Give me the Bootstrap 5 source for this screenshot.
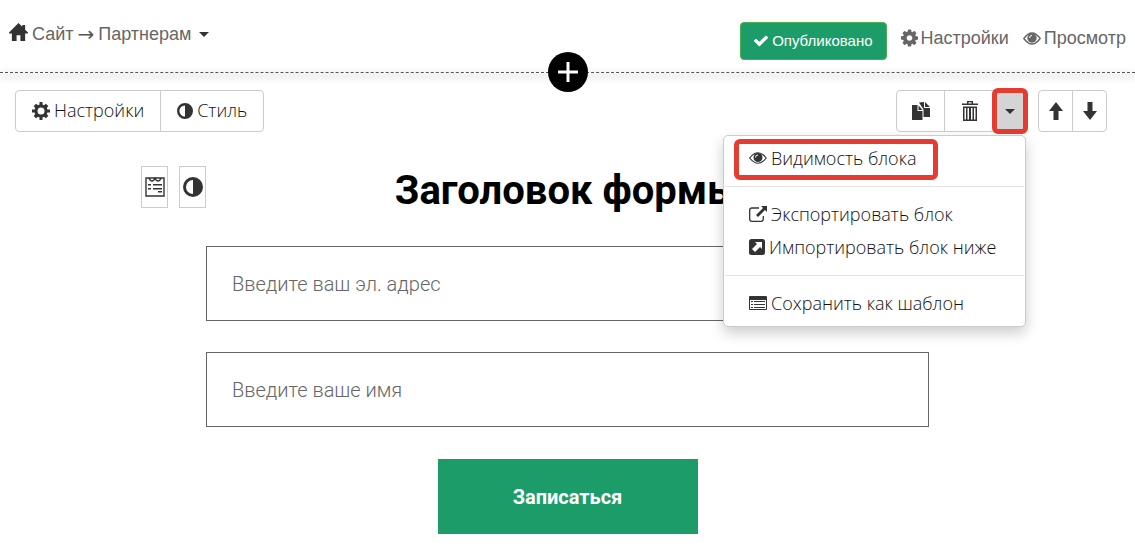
<!DOCTYPE html>
<html lang="ru">
<head>
<meta charset="utf-8">
<meta name="viewport" content="width=device-width, initial-scale=1">
<title>Сайт → Партнерам</title>
<link href="https://cdn.jsdelivr.net/npm/bootstrap@5.3.0/dist/css/bootstrap.min.css" rel="stylesheet">
<style>
body{background:#fff;color:#333;font-family:"Open Sans",sans-serif;font-size:18px;line-height:24px}
svg{fill:currentColor;flex:none;display:block}
.topbar{height:72px;font-family:"Liberation Sans",Arial,sans-serif;padding:0 9px}
.topbar a,.crumb{color:#666;text-decoration:none}
.crumb{height:68px;gap:4px}
.crumb svg{color:#333}
.crumb-home{margin-bottom:4px}
.crumb-arrow{font-family:"DejaVu Sans",sans-serif;font-size:20px;color:#555}
.actions{height:76px;gap:14px}
.actions a{gap:3px}
.btn-publish{height:38px;margin-top:6px;padding:0 13px;border:1px solid #4cae4c;border-radius:4px;background:#1b9c68;color:#fff;font-size:15px}
.insert-line{height:0;border-top:1px dashed #555;box-shadow:0 3px 8px 1px rgba(0,0,0,.18)}
.insert-btn{width:40px;height:40px;top:-21px;left:50%;transform:translateX(-50%);border:0;border-radius:50%;background:#000;color:#fff;z-index:2}
.tools{padding:17px 28px 0 15px}
.tools svg{color:#333}
.tool-groups{gap:12px}
.tool{height:42px;padding:0 16px 1px;border:1px solid #ccc;background:#fff;color:#111;font-size:18px;font-weight:300;border-radius:4px}
.tool-copy{width:49px;padding:0}
.tool-trash{width:51px;padding:0}
.tool-arrow{width:35px;padding:0}
.tool-more{width:32px;padding:0;background:#d4d4d4!important}
.tool-more.marked{outline:5px solid #e53c32;outline-offset:-3px;z-index:3;border-radius:4px!important}
.block-menu{width:303px;top:45px;right:0;padding:6px 0;border:1px solid #ccc;border-radius:5px;box-shadow:0 6px 14px rgba(0,0,0,.2);font-size:18px;z-index:4}
.block-menu .dropdown-item{height:33px;padding:0 25px 1px;color:#111;gap:4px;font-weight:300}
.block-menu .dropdown-divider{margin:11px 1px;border-color:#e2e2e2}
.block-menu .frame{display:block;width:204px;height:41px;top:3px;left:10px;border:5px solid #e53c32;border-radius:6px;pointer-events:none}
.form-grid{display:grid;grid-template-columns:1fr minmax(0,723px) 1fr;row-gap:30px;padding-top:34px;font-family:Roboto,sans-serif}
.mini-tools{gap:11px}
.mini{width:27px;height:42px;border:1px solid #ccc;background:#fff;color:#333;padding:0}
.form-title{font-size:40px;line-height:50px;font-weight:700;color:#000;margin:0}
.form-grid form{grid-column:2;gap:31px}
.field{height:75px;padding:0 25px;border:1px solid #666;border-radius:0;font-size:20px;font-weight:300}
.field::placeholder{color:#666;opacity:1}
.btn-send{width:260px;height:75px;border:0;border-radius:0;background:#1b9c68;color:#fff;font-size:20px;font-weight:700;margin-top:1px}
</style>
</head>
<body>
<svg class="d-none" aria-hidden="true">
<symbol id="cog" viewBox="128 128 1536 1536"><path d="M1152 896q0-106-75-181t-181-75-181 75-75 181 75 181 181 75 181-75 75-181zm512-109v222q0 12-8 23t-20 13l-185 28q-19 54-39 91 35 50 107 138 10 12 10 25t-9 23q-27 37-99 108t-94 71q-12 0-26-9l-138-108q-44 23-91 38-16 136-29 186-7 28-36 28h-222q-14 0-24.500-8.500t-11.500-21.500l-28-184q-49-16-90-37l-141 107q-10 9-25 9-14 0-25-11-126-114-165-168-7-10-7-23 0-12 8-23 15-21 51-66.500t54-70.500q-27-50-41-99l-183-27q-13-2-21-12.500t-8-23.500v-222q0-12 8-23t19-13l186-28q14-46 39-92-40-57-107-138-10-12-10-24 0-10 9-23 26-36 98.500-107.500t94.500-71.500q13 0 26 10l138 107q44-23 91-38 16-136 29-186 7-28 36-28h222q14 0 24.500 8.500t11.500 21.500l28 184q49 16 90 37l142-107q9-9 24-9 13 0 25 10 129 119 165 170 7 8 7 22 0 12-8 23-15 21-51 66.500t-54 70.500q26 50 41 98l183 28q13 2 21 12.500t8 23.500z"/></symbol>
<symbol id="gear" viewBox="0 0 18 18"><path fill-rule="evenodd" d="M7.500 0h3v2.600l1.500.6L13.900 1.700l2.400 2.400L14.800 6l.6 1.500H18v3h-2.600l-.6 1.500 1.500 1.900-2.400 2.400-1.900-1.500-1.500.6V18h-3v-2.600L6 14.800l-1.900 1.500-2.400-2.400L3.200 12l-.6-1.500H0v-3h2.600L3.200 6 1.700 4.100l2.400-2.400L6 3.200l1.500-.6zM9 5.500a3.500 3.500 0 1 0 0 7 3.500 3.500 0 0 0 0-7z"/></symbol>
<symbol id="half" viewBox="0 0 20 20"><path fill-rule="evenodd" d="M10 0a10 10 0 1 1 0 20 10 10 0 0 1 0-20zm0 3a7 7 0 0 0 0 14z"/></symbol>
<symbol id="caret" viewBox="0 0 10 5"><path d="M0 0h10L5 5z"/></symbol>
</svg>

<header class="topbar d-flex justify-content-between">
  <nav class="crumb d-flex align-items-center" aria-label="Путь">
    <svg class="crumb-home" width="19" height="18" viewBox="0 0 20 19"><path d="M10 0l4 4V2h3v5l3 3v1h-3v8h-5v-6H8v6H3v-8H0v-1z"/></svg>
    <a href="#">Сайт</a><span class="crumb-arrow">→</span>
    <a href="#" class="d-flex align-items-center gap-2">Партнерам <svg width="10" height="5"><use href="#caret"/></svg></a>
  </nav>
  <div class="actions d-flex align-items-center">
    <button type="button" class="btn btn-publish d-flex align-items-center gap-1"><svg width="14" height="12" viewBox="120 330 1552 1200"><path d="M1671 566q0 40-28 68l-724 724-136 136q-28 28-68 28t-68-28l-136-136-362-362q-28-28-28-68t28-68l136-136q28-28 68-28t68 28l294 295 656-657q28-28 68-28t68 28l136 136q28 28 28 68z"/></svg>Опубликовано</button>
    <a href="#" class="d-flex align-items-center"><svg width="17" height="18"><use href="#cog"/></svg>Настройки</a>
    <a href="#" class="d-flex align-items-center"><svg width="18" height="13" viewBox="0 0 18 13"><path fill="none" stroke="currentColor" stroke-width="1.400" d="M.8 6.500Q9-4.500 17.200 6.500 9 17.500.8 6.500z"/><circle cx="9" cy="6" r="4.700"/><path fill="none" stroke="#fff" d="M6.500 6A2.500 2.500 0 0 1 9 3.500"/></svg>Просмотр</a>
  </div>
</header>

<div class="insert-line position-relative">
  <button type="button" class="insert-btn position-absolute p-0 d-flex align-items-center justify-content-center" aria-label="Добавить блок"><svg width="20" height="20" viewBox="0 0 20 20"><path d="M8.500 0h3v8.500H20v3h-8.500V20h-3v-8.500H0v-3h8.500z"/></svg></button>
</div>

<main>
  <div class="tools d-flex justify-content-between">
    <div class="btn-group">
      <button type="button" class="btn tool d-flex align-items-center gap-1"><svg width="18" height="18"><use href="#gear"/></svg>Настройки</button>
      <button type="button" class="btn tool d-flex align-items-center gap-1"><svg width="16" height="16"><use href="#half"/></svg>Стиль</button>
    </div>
    <div class="tool-groups d-flex">
      <div class="btn-group position-relative">
        <button type="button" class="btn tool tool-copy d-flex align-items-center justify-content-center" aria-label="Копировать"><svg width="18" height="18" viewBox="0 0 18 18"><path d="M0 3h5.500v6h5v9H0zM6.500 3.500L10.500 8h-4zM7 .5L12 0v6h6v9h-6.500V7.500zM13 0l5 5h-5z"/></svg></button>
        <button type="button" class="btn tool tool-trash d-flex align-items-center justify-content-center" aria-label="Удалить"><svg width="16" height="20" viewBox="0 0 16 20"><path fill-rule="evenodd" d="M5 0h6v2.500h5V4H0V2.500h5zm1.500 1.200v1.300h3V1.200zM1 5.500h14V20H1zm1.500 1.500v11.500H4V7zm3 0v11.500H7V7zm3.500 0v11.500h1.500V7zm3 0v11.500h1.500V7z"/></svg></button>
        <button type="button" class="btn tool tool-more marked d-flex align-items-center justify-content-center" aria-expanded="true" aria-label="Действия с блоком"><svg width="10" height="5"><use href="#caret"/></svg></button>
        <ul class="block-menu dropdown-menu show position-absolute m-0">
          <li><a class="dropdown-item d-flex align-items-center" href="#"><svg width="18" height="12" viewBox="0 0 18 12"><path fill="none" stroke="currentColor" stroke-width="1.200" d="M.7 6Q9-4.500 17.300 6 9 16.500.7 6z"/><circle cx="9" cy="5.500" r="4.500"/><path fill="none" stroke="#fff" d="M6.500 5.500A2.500 2.500 0 0 1 9 3"/></svg>Видимость блока</a><span class="frame position-absolute"></span></li>
          <li><hr class="dropdown-divider"></li>
          <li><a class="dropdown-item d-flex align-items-center" href="#"><svg width="18" height="16" viewBox="0 0 18 16"><path fill="none" stroke="currentColor" stroke-width="1.300" d="M10 2H3Q.7 2 .7 4v9q0 2.300 2.300 2.300h9q2.300 0 2.300-2.300v-3"/><path d="M12 0h6v6l-2-2-7 7-2-2 7-7z"/></svg>Экспортировать блок</a></li>
          <li><a class="dropdown-item d-flex align-items-center" href="#"><svg width="16" height="16" viewBox="0 0 16 16"><path fill-rule="evenodd" d="M2.500 0h11Q16 0 16 2.500v11q0 2.500-2.500 2.500h-11Q0 16 0 13.500v-11Q0 0 2.500 0zM6 3l2 2-5 5 3 3 5-5 2 2V3z"/></svg>Импортировать блок ниже</a></li>
          <li><hr class="dropdown-divider"></li>
          <li><a class="dropdown-item d-flex align-items-center" href="#"><svg width="18" height="14" viewBox="0 0 18 14"><path fill-rule="evenodd" d="M1 0h16q1 0 1 1v12q0 1-1 1H1q-1 0-1-1V1q0-1 1-1zm0 4v9h16V4z"/><path d="M2 5h2v1H2zm3 0h11v1H5zM2 8h2v1H2zm3 0h11v1H5zm-3 3h2v1H2zm3 0h11v1H5z"/></svg>Сохранить как шаблон</a></li>
        </ul>
      </div>
      <div class="btn-group">
        <button type="button" class="btn tool tool-arrow d-flex align-items-center justify-content-center" aria-label="Выше"><svg width="14" height="18" viewBox="0 0 14 18"><path d="M7 0l7 9H9.500v9h-5V9H0z"/></svg></button>
        <button type="button" class="btn tool tool-arrow d-flex align-items-center justify-content-center" aria-label="Ниже"><svg width="14" height="18" viewBox="0 0 14 18"><path d="M7 18l7-9H9.500V0h-5v9H0z"/></svg></button>
      </div>
    </div>
  </div>

  <section class="form-grid">
    <div class="mini-tools d-flex justify-content-end">
      <button type="button" class="mini d-flex align-items-center justify-content-center" aria-label="Форма"><svg width="20" height="20" viewBox="0 0 20 20"><path fill="none" stroke="currentColor" stroke-width="1.400" d="M1 1h18v18H1zM4 1q1 3 3 3t3-3q1 3 3 3t3-3"/><path d="M3 7h3v1.500H3zm5 0h9v1.500H8zM3 11h3v1.500H3zm5 0h9v1.500H8zm5 3h4v1.500h-4z"/></svg></button>
      <button type="button" class="mini d-flex align-items-center justify-content-center" aria-label="Стиль формы"><svg width="20" height="20"><use href="#half"/></svg></button>
    </div>
    <h1 class="form-title text-center">Заголовок формы</h1>
    <form class="d-flex flex-column">
      <input type="email" class="form-control field" placeholder="Введите ваш эл. адрес" aria-label="Эл. адрес">
      <input type="text" class="form-control field" placeholder="Введите ваше имя" aria-label="Имя">
      <button type="button" class="btn btn-send align-self-center">Записаться</button>
    </form>
  </section>
</main>
<script src="https://cdn.jsdelivr.net/npm/bootstrap@5.3.0/dist/js/bootstrap.bundle.min.js"></script>
</body>
</html>
